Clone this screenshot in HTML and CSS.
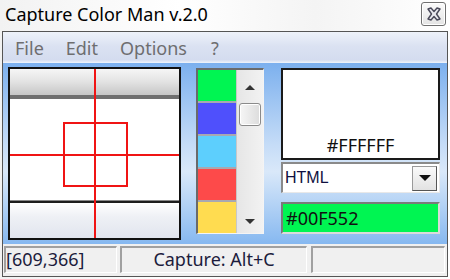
FILE: index.html
```html
<!DOCTYPE html>
<html lang="en">
<head>
  <meta charset="UTF-8" />
  <title>Capture Color Man v.2.0</title>
  <link rel="stylesheet" href="styles.css">
</head>
<body>

<div class="titlebar">
  <div class="title">Capture Color Man v.2.0</div>
  <div class="close-btn" title="Close">
    <svg width="16" height="14" viewBox="0 0 16 14">
      <path d="M2 2 L5 1 L8 4.5 L11 1 L14 2 L10.5 7 L14 12 L11 13 L8 9.5 L5 13 L2 12 L5.5 7 Z" fill="#e8e8ee" stroke="#4a4a5a" stroke-width="1.4" stroke-linejoin="round"/>
    </svg>
  </div>
</div>

<div class="window">
  <!-- menu -->
  <div class="menubar">
    <span>File</span>
    <span>Edit</span>
    <span>Options</span>
    <span>?</span>
  </div>

  <div class="content">
    <!-- zoom view -->
    <div class="zoom-view">
      <div class="band-top"></div>
      <div class="band-dark"></div>
      <div class="band-white"></div>
      <div class="band-line"></div>
      <div class="band-bottom"></div>
      <div class="cross-v"></div>
      <div class="cross-h"></div>
      <div class="cross-box"></div>
    </div>

    <!-- saved colours -->
    <div class="color-list">
      <div class="swatches">
        <div class="swatch" style="background:#00f552"></div>
        <div class="swatch" style="background:#4f50fc"></div>
        <div class="swatch" style="background:#5dcffd"></div>
        <div class="swatch" style="background:#fd4a4a"></div>
        <div class="swatch" style="background:#ffdc50"></div>
      </div>
      <div class="scrollbar">
        <div class="arrow-up"></div>
        <div class="thumb"></div>
        <div class="track"></div>
        <div class="arrow-down"></div>
      </div>
    </div>

    <!-- current colour -->
    <div class="right-panel">
      <div class="preview">#FFFFFF</div>
      <div class="combo">
        <span>HTML</span>
        <div class="combo-btn"><div class="arrow-down dark"></div></div>
      </div>
      <div class="color-value">#00F552</div>
    </div>
  </div>

  <div class="statusbar">
    <div class="panel p1">[609,366]</div>
    <div class="panel p2">Capture: Alt+C</div>
    <div class="panel p3"></div>
  </div>
</div>

</body>
</html>
```

FILE: styles.css
```css
* {
  box-sizing: border-box;
}
body {
  margin: 0;
  width: 450px;
  height: 279px;
  overflow: hidden;
  font-family: "Noto Sans", "Open Sans", sans-serif;
  background: linear-gradient(90deg, #f2f2f2, #ffffff 40%, #f4f4f4 70%, #ffffff);
}

/* title bar */
.titlebar {
  height: 31px;
  display: flex;
  justify-content: space-between;
  align-items: flex-start;
  padding: 0 4px 0 5px;
}
.title {
  font-size: 18px;
  color: #000;
  line-height: 28px;
}
.close-btn {
  margin-top: 2px;
  width: 25px;
  height: 24px;
  border: 1px solid #707070;
  border-radius: 3px;
  background: linear-gradient(#fbfbfb, #e4e4e4);
  box-shadow: inset 0 0 0 1px #ffffff;
  display: flex;
  align-items: center;
  justify-content: center;
}

/* window */
.window {
  margin: 0 2px;
  height: 246px;
  border: 1px solid #555;
  display: flex;
  flex-direction: column;
}
.menubar {
  height: 31px;
  display: flex;
  align-items: center;
  padding-left: 12px;
  background: linear-gradient(#eef2fa, #dbe2f2 45%, #d4dcef 90%, #f0f4fb);
  font-size: 18px;
  color: #6e6e70;
}
.menubar span {
  margin-right: 22px;
}
.menubar span:nth-child(3) {
  margin-right: 24px;
}

/* content */
.content {
  height: 181px;
  display: flex;
  align-items: flex-start;
  padding: 4px 6px 0 5px;
  background: linear-gradient(#7cb0ee, #c5dcf7 45%, #d9e8f9 60%, #86b8f0);
}

.zoom-view {
  position: relative;
  width: 173px;
  height: 173px;
  border: 2px solid #111;
  display: flex;
  flex-direction: column;
  background: #fff;
}
.band-top {
  height: 26px;
  background: linear-gradient(#f6f6f6, #e2e2e2 50%, #c6c6c6);
}
.band-dark {
  height: 4px;
  background: #6f6f6f;
}
.band-white {
  height: 101px;
  background: #fff;
}
.band-line {
  height: 3px;
  background: #1d1d1d;
  border-top: 1px solid #888;
}
.band-bottom {
  flex: 1;
  background: linear-gradient(#ffffff, #eef0f5 40%, #e1e5ee);
}
.cross-v {
  position: absolute;
  left: 84px;
  top: 0;
  bottom: 0;
  width: 2px;
  background: #f01414;
}
.cross-h {
  position: absolute;
  left: 0;
  right: 0;
  top: 85px;
  height: 2px;
  background: #f01414;
}
.cross-box {
  position: absolute;
  left: 53px;
  top: 53px;
  width: 65px;
  height: 65px;
  border: 2px solid #f01414;
}

/* colour list */
.color-list {
  margin: 1px 0 0 15px;
  width: 68px;
  height: 166px;
  display: flex;
  border-top: 2px solid #6a6a6a;
  border-left: 2px solid #6a6a6a;
  border-right: 1px solid #f4f4f4;
  border-bottom: 1px solid #f4f4f4;
  overflow: hidden;
  background: #ececec;
}
.swatches {
  width: 39px;
  border-right: 1px solid #c8c8c8;
}
.swatch {
  height: 33px;
  border-bottom: 2px solid #a8a8b0;
}
.scrollbar {
  flex: 1;
  display: flex;
  flex-direction: column;
  align-items: center;
  background: linear-gradient(90deg, #e6e6e6, #f2f2f2);
  padding: 15px 0 9px;
}
.arrow-up {
  width: 0;
  height: 0;
  border-left: 5px solid transparent;
  border-right: 5px solid transparent;
  border-bottom: 5px solid #333;
}
.arrow-down {
  width: 0;
  height: 0;
  border-left: 5px solid transparent;
  border-right: 5px solid transparent;
  border-top: 5px solid #333;
}
.arrow-down.dark {
  border-left-width: 6px;
  border-right-width: 6px;
  border-top: 6px solid #111;
}
.thumb {
  margin-top: 13px;
  width: 22px;
  height: 23px;
  border: 1px solid #8a8a8a;
  border-radius: 3px;
  background: linear-gradient(90deg, #f6f6f6, #dcdcdc);
  box-shadow: inset 0 0 0 1px #fff;
}
.track {
  flex: 1;
}

/* right panel */
.right-panel {
  margin: 1px 0 0 17px;
  width: 159px;
  display: flex;
  flex-direction: column;
}
.preview {
  height: 92px;
  border: 2px solid #1a1a1a;
  background: #fff;
  display: flex;
  align-items: flex-end;
  justify-content: center;
  padding-bottom: 1px;
  font-size: 18px;
  color: #111;
}
.combo {
  margin-top: 2px;
  height: 31px;
  border-top: 2px solid #8a8a8a;
  border-left: 2px solid #8a8a8a;
  border-right: 1px solid #e8e8e8;
  border-bottom: 1px solid #e8e8e8;
  background: #fff;
  display: flex;
  align-items: center;
  justify-content: space-between;
  padding: 0 2px 0 2px;
  font-family: "Liberation Sans", Arial, sans-serif;
  font-size: 16px;
  color: #101040;
}
.combo-btn {
  width: 25px;
  height: 25px;
  border: 1px solid #9a9a9a;
  border-right-color: #555;
  border-bottom-color: #555;
  background: linear-gradient(#fafafa, #e2e2e2);
  display: flex;
  align-items: center;
  justify-content: center;
}
.color-value {
  margin-top: 9px;
  height: 32px;
  border-top: 2px solid #7a7a7a;
  border-left: 2px solid #7a7a7a;
  border-right: 2px solid #dadada;
  border-bottom: 2px solid #dadada;
  background: #00f552;
  display: flex;
  align-items: center;
  padding-left: 3px;
  font-size: 18px;
  color: #111;
}

/* status bar */
.statusbar {
  flex: 1;
  display: flex;
  align-items: flex-start;
  background: #f0f0f0;
  padding: 2px 0 0 1px;
}
.panel {
  height: 27px;
  border-top: 2px solid #a0a0a0;
  border-left: 2px solid #a0a0a0;
  border-right: 1px solid #fff;
  border-bottom: 1px solid #fff;
  font-size: 18px;
  color: #1c1c3c;
  line-height: 23px;
  white-space: nowrap;
}
.p1 {
  width: 113px;
  padding-left: 0;
}
.p2 {
  width: 187px;
  margin-left: 3px;
  text-align: center;
}
.p3 {
  width: 134px;
  margin-left: 4px;
}
```
